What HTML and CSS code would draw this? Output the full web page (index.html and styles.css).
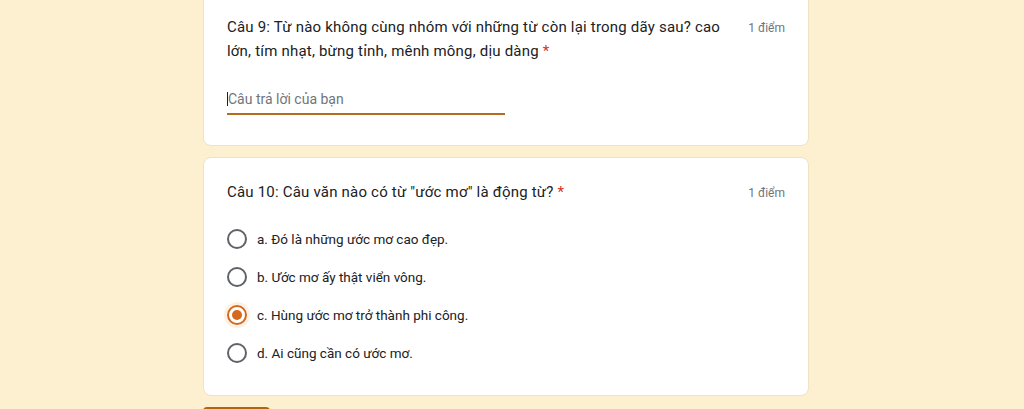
FILE: index.html
```html
<!DOCTYPE html>
<html lang="vi">
<head>
    <meta charset="UTF-8">
    <title>Câu hỏi</title>
    <link rel="stylesheet" href="styles.css">
</head>
<body>
    <div class="form">
        <div class="card card-first">
            <div class="q-head">
                <div class="q-title">Câu 9: Từ nào không cùng nhóm với những từ còn lại trong dãy sau? cao lớn, tím nhạt, bừng tỉnh, mênh mông, dịu dàng <span class="req">*</span></div>
                <div class="points">1 điểm</div>
            </div>
            <div class="answer">
                <span class="caret"></span><span class="placeholder">Câu trả lời của bạn</span>
            </div>
        </div>

        <div class="card card-second">
            <div class="q-head">
                <div class="q-title">Câu 10: Câu văn nào có từ "ước mơ" là động từ? <span class="req">*</span></div>
                <div class="points">1 điểm</div>
            </div>
            <div class="options">
                <div class="option"><span class="radio"></span><span class="label">a. Đó là những ước mơ cao đẹp.</span></div>
                <div class="option"><span class="radio"></span><span class="label">b. Ước mơ ấy thật viển vông.</span></div>
                <div class="option"><span class="radio checked"></span><span class="label">c. Hùng ước mơ trở thành phi công.</span></div>
                <div class="option"><span class="radio"></span><span class="label">d. Ai cũng cần có ước mơ.</span></div>
            </div>
        </div>

        <div class="submit"></div>
    </div>
</body>
</html>
```

FILE: styles.css
```css
body, html {
    margin: 0;
    padding: 0;
    height: 100%;
    overflow: hidden;
    background-color: #fdf0d0;
    font-family: Roboto, Arial, sans-serif;
    color: #202124;
}
.form {
    width: 606px;
    margin: -9px 0 0 203px;
    display: flex;
    flex-direction: column;
    gap: 11px;
}
.card {
    background-color: white;
    border: 1px solid #efe3c6;
    border-radius: 8px;
    padding: 0 23px;
}
.card-first {
    padding-top: 23px;
    padding-bottom: 30px;
}
.card-second {
    padding-top: 22px;
    padding-bottom: 23px;
}
.q-head {
    display: flex;
    justify-content: space-between;
    align-items: flex-start;
}
.q-title {
    width: 505px;
    font-size: 15px;
    line-height: 24px;
    letter-spacing: 0.2px;
}
.req {
    color: #d93025;
}
.points {
    font-size: 12px;
    line-height: 24px;
    color: #70757a;
    padding-top: 1px;
}
.answer {
    width: 278px;
    height: 28px;
    margin-top: 22px;
    border-bottom: 2px solid #b66c1f;
    display: flex;
    align-items: center;
}
.caret {
    width: 1px;
    height: 14px;
    background-color: #202124;
}
.placeholder {
    font-size: 14px;
    color: #70757a;
}
.options {
    margin-top: 15px;
}
.option {
    height: 38px;
    display: flex;
    align-items: center;
}
.radio {
    box-sizing: border-box;
    width: 20px;
    height: 20px;
    border: 2px solid #5f6368;
    border-radius: 50%;
    margin-right: 10px;
    display: flex;
    align-items: center;
    justify-content: center;
}
.radio.checked {
    border-color: #d5681c;
    box-shadow: 0 0 0 3px #fdf0e4;
}
.radio.checked::after {
    content: "";
    width: 10px;
    height: 10px;
    border-radius: 50%;
    background-color: #d5681c;
}
.label {
    font-size: 13.5px;
}
.submit {
    width: 67px;
    height: 36px;
    background-color: #b4630f;
    border-radius: 4px;
}
```
